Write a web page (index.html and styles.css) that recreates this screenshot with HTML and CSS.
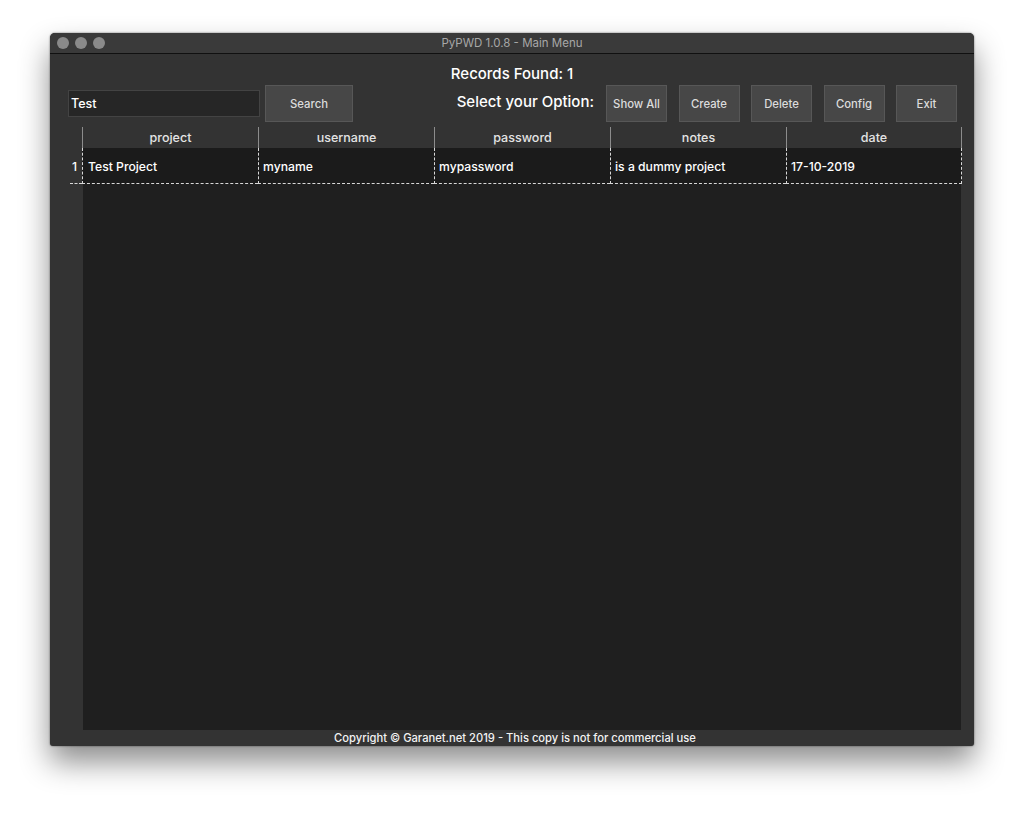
FILE: index.html
```html
<!DOCTYPE html>
<html>
<head>
<meta charset="utf-8">
<title>PyPWD 1.0.8 - Main Menu</title>
<link rel="stylesheet" href="styles.css">
</head>
<body>
<div class="window">
  <div class="titlebar">
    <div class="lights"><span class="light"></span><span class="light"></span><span class="light"></span></div>
    <div class="title">PyPWD 1.0.8 - Main Menu</div>
  </div>
  <div class="content">
    <div class="records">Records Found: 1</div>
    <div class="controls">
      <div class="input">Test</div>
      <div class="btn btn-search">Search</div>
      <div class="spacer"></div>
      <div class="label">Select your Option:</div>
      <div class="btn btn-opt btn-first">Show All</div>
      <div class="btn btn-opt">Create</div>
      <div class="btn btn-opt">Delete</div>
      <div class="btn btn-opt">Config</div>
      <div class="btn btn-opt">Exit</div>
    </div>
    <div class="table">
      <div class="th th-num"></div>
      <div class="th">project</div>
      <div class="th">username</div>
      <div class="th">password</div>
      <div class="th">notes</div>
      <div class="th th-last">date</div>
      <div class="td td-num">1</div>
      <div class="td">Test Project</div>
      <div class="td">myname</div>
      <div class="td">mypassword</div>
      <div class="td">is a dummy project</div>
      <div class="td td-last">17-10-2019</div>
    </div>
    <div class="table-fill"></div>
    <div class="footer">Copyright © Garanet.net 2019 - This copy is not for commercial use</div>
  </div>
</div>
</body>
</html>
```
FILE: styles.css
```css
html, body {
  margin: 0;
  padding: 0;
  background: #ffffff;
}
body {
  font-family: "Inter", "Roboto", "Liberation Sans", sans-serif;
  color: #ffffff;
  width: 1024px;
  height: 813px;
  overflow: hidden;
}
.window {
  margin: 33px 0 0 50px;
  width: 924px;
  height: 713px;
  border-radius: 5px 5px 3px 3px;
  overflow: hidden;
  background: #333333;
  box-shadow: 0 16px 30px rgba(0, 0, 0, 0.45), 0 0 2px rgba(0, 0, 0, 0.6);
  display: flex;
  flex-direction: column;
}
.titlebar {
  height: 20px;
  border-bottom: 1px solid #101010;
  background: #3a3a3a;
  display: flex;
  align-items: center;
  position: relative;
}
.lights {
  display: flex;
  gap: 6px;
  padding-left: 7px;
}
.light {
  width: 12px;
  height: 12px;
  border-radius: 50%;
  background: #8a8a8a;
}
.title {
  position: absolute;
  left: 0;
  right: 0;
  top: 0;
  line-height: 21px;
  text-align: center;
  font-size: 11.5px;
  color: #a8a8a8;
}
.content {
  flex: 1;
  display: flex;
  flex-direction: column;
}
.records {
  padding-top: 10px;
  height: 21px;
  line-height: 19px;
  text-align: center;
  font-size: 15px;
  font-weight: 500;
}
.controls {
  display: flex;
  align-items: center;
  height: 37px;
  padding: 0 17px 0 18px;
}
.input {
  width: 188px;
  height: 25px;
  border: 1px solid #434343;
  background: #262626;
  font-size: 12.5px;
  font-weight: 500;
  line-height: 25px;
  padding-left: 2px;
  box-sizing: content-box;
}
.btn {
  height: 35px;
  border: 1px solid #575757;
  background: #474747;
  color: #dcdcdc;
  font-size: 11.3px;
  font-weight: 500;
  display: flex;
  align-items: center;
  justify-content: center;
}
.btn-search {
  width: 86px;
  margin-left: 5px;
}
.spacer {
  flex: 1;
}
.label {
  font-size: 15px;
  font-weight: 500;
  margin-top: -5px;
  margin-right: 12px;
}
.btn-opt {
  width: 59px;
  margin-left: 11.5px;
}
.btn-first {
  margin-left: 0;
}
.table {
  margin-top: 5px;
  margin-left: 20px;
  width: 892px;
  display: grid;
  grid-template-columns: 12px repeat(5, 176px);
  grid-template-rows: 21px 36px;
}
.th {
  border-left: 1px solid #8c8c8c;
  text-align: center;
  font-size: 12.5px;
  font-weight: 500;
  color: #e4e4e4;
  line-height: 22px;
}
.th-num {
  border-left: none;
}
.th-last {
  border-right: 1px solid #8c8c8c;
}
.td {
  background: #1b1b1b;
  border-left: 1px dashed #d8d8d8;
  border-bottom: 1px dashed #d8d8d8;
  font-size: 12.2px;
  font-weight: 500;
  line-height: 37px;
  height: 35px;
  padding-left: 4px;
  white-space: nowrap;
}
.td-num {
  background: #333333;
  border-left: none;
  padding-left: 2px;
}
.td-num + .td {
  padding-left: 5px;
}
.td-last {
  border-right: 1px dashed #d8d8d8;
}
.table-fill {
  flex: 1;
  margin-left: 33px;
  width: 878px;
  background: #1f1f1f;
}
.footer {
  height: 16px;
  line-height: 16px;
  text-align: center;
  font-size: 11.2px;
  font-weight: 500;
  color: #f2f2f2;
  padding-left: 6px;
}
```
